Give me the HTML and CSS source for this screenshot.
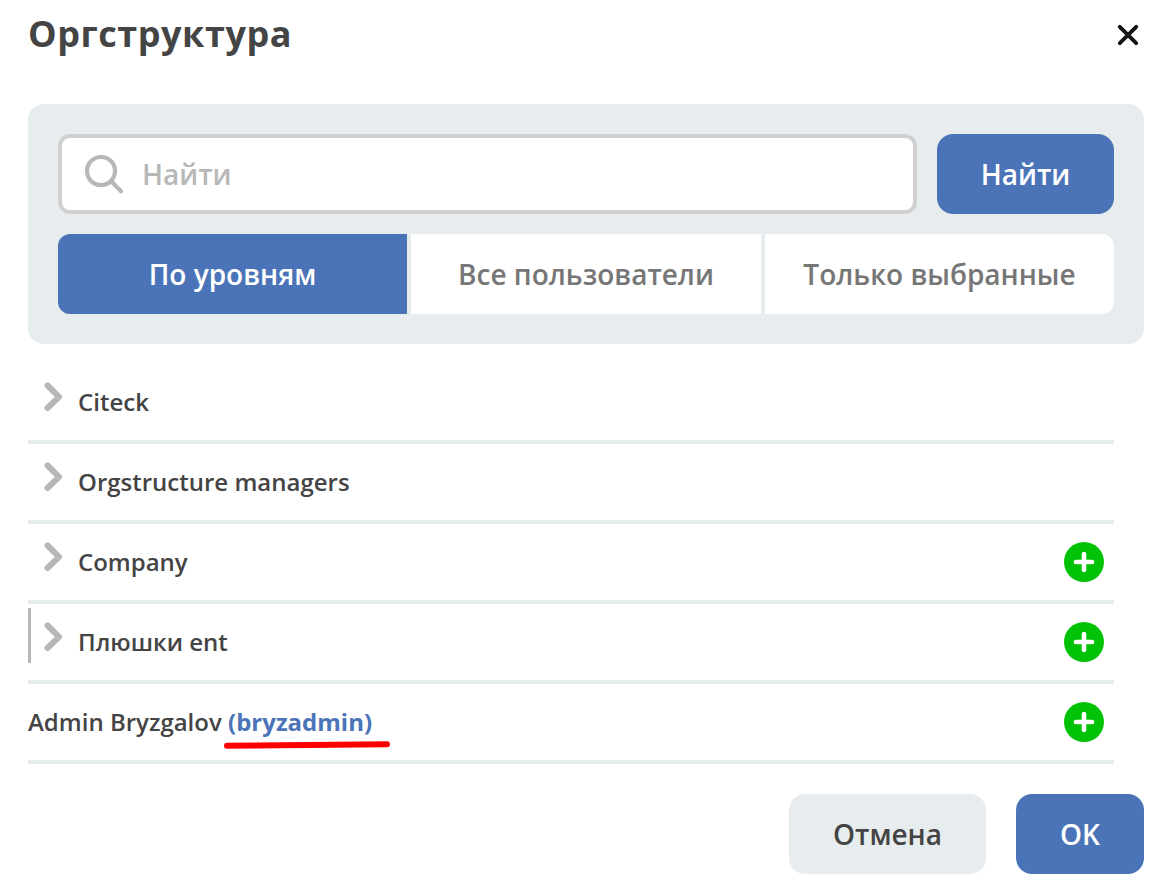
FILE: index.html
```html
<!DOCTYPE html>
<html lang="ru">
<head>
<meta charset="utf-8">
<title>Оргструктура</title>
<link rel="stylesheet" href="styles.css">
</head>
<body>
<svg class="sprite" aria-hidden="true">
  <symbol id="chevron" viewBox="0 0 20 30"><path d="M3.5 3.5 15 14.8 3.5 26"/></symbol>
  <symbol id="plus" viewBox="0 0 40 40"><path d="M20 12v16M12 20h16"/></symbol>
</svg>
<main class="modal">
  <header class="modal-header">
    <h1 class="title"><span>Оргструктура</span></h1>
    <button class="close" aria-label="Закрыть"><svg class="close-icon" viewBox="0 0 22 22"><path d="M2.8 2.8 19.2 19.2M19.2 2.8 2.8 19.2"/></svg></button>
  </header>
  <section class="panel">
    <div class="search-row">
      <div class="search-field">
        <svg class="search-icon" viewBox="0 0 40 40"><circle cx="17" cy="17" r="14"/><path d="M27.2 27.2 37 37.2"/></svg>
        <span class="placeholder">Найти</span>
      </div>
      <button class="btn btn-primary btn-find"><span>Найти</span></button>
    </div>
    <div class="tabs">
      <button class="tab tab-active"><span>По уровням</span></button>
      <button class="tab"><span>Все пользователи</span></button>
      <button class="tab"><span>Только выбранные</span></button>
    </div>
  </section>
  <ul class="list">
    <li class="row"><svg class="chevron"><use href="#chevron"/></svg><span class="name">Citeck</span></li>
    <li class="row"><svg class="chevron"><use href="#chevron"/></svg><span class="name">Orgstructure managers</span></li>
    <li class="row"><svg class="chevron"><use href="#chevron"/></svg><span class="name">Company</span><svg class="add"><use href="#plus"/></svg></li>
    <li class="row row-marked"><svg class="chevron"><use href="#chevron"/></svg><span class="name">Плюшки ent</span><svg class="add"><use href="#plus"/></svg></li>
    <li class="row row-person"><span class="name">Admin Bryzgalov <strong class="login">(bryzadmin)<svg class="underline" viewBox="0 0 166 8"><path d="M3 4.8 163 3.2"/></svg></strong></span><svg class="add"><use href="#plus"/></svg></li>
  </ul>
  <footer class="actions">
    <button class="btn btn-cancel"><span>Отмена</span></button>
    <button class="btn btn-primary btn-ok"><span>OK</span></button>
  </footer>
</main>
</body>
</html>
```
FILE: styles.css
```css
* { box-sizing: border-box; }
body {
  margin: 0;
  background: #fff;
  color: #444;
  font-family: "Open Sans", sans-serif;
}
button {
  border: 0;
  padding: 0;
  background: none;
  color: inherit;
  font: inherit;
}
svg { fill: none; stroke-linecap: round; stroke-linejoin: round; }
.sprite { display: none; }
.modal { height: 894px; padding: 0 27px 0 28px; overflow: hidden; }
.modal-header {
  display: flex;
  justify-content: space-between;
  align-items: center;
  height: 70px;
}
.title { margin: 0 0 2px; font-size: 36px; line-height: 48px; font-weight: 700; letter-spacing: 0.54px; }
.close { display: flex; margin-right: 5px; }
.close-icon { width: 22px; height: 22px; stroke: #141414; stroke-width: 3.9; }
.panel {
  height: 240px;
  margin-top: 34px;
  padding: 30px;
  border-radius: 16px;
  background: #e7ecee;
}
.search-row { display: flex; gap: 20px; }
.search-field {
  flex: 1;
  display: flex;
  align-items: center;
  gap: 18px;
  height: 80px;
  padding-left: 22px;
  border: 4px solid #d0d0d0;
  border-radius: 12px;
  background: #fff;
}
.search-icon { width: 40px; height: 40px; stroke: #b7b7b7; stroke-width: 4.2; }
.placeholder { color: #b7b7b7; font-size: 28px; font-weight: 600; }
.btn { height: 80px; border-radius: 16px; font-size: 28px; font-weight: 600; }
.btn-primary { background: #4b74b8; color: #fff; }
.btn-find { width: 177px; }
.tabs { display: grid; grid-template-columns: 349px 350px 349px; gap: 4px; margin-top: 20px; border-radius: 12px; overflow: hidden; }
.tab { height: 80px; background: #fff; color: #767676; font-size: 28px; font-weight: 600; }
.tab-active { background: #4b74b8; color: #fff; }
.list { margin: 20px 30px 0 0; padding: 0; list-style: none; }
.row {
  position: relative;
  display: flex;
  align-items: center;
  height: 80px;
  padding: 0 10px 0 16px;
  border-bottom: 4px solid #e7ecee;
}
.chevron { width: 20px; height: 30px; margin: -10px 14px 0 0; stroke: #b7b7b7; stroke-width: 6; }
.name { font-size: 24px; line-height: 36px; font-weight: 600; }
.add { width: 40px; height: 40px; margin-left: auto; border-radius: 50%; background: #00c308; stroke: #fff; stroke-width: 4.6; }
.row-marked::before {
  content: "";
  position: absolute;
  left: 0;
  top: 4px;
  width: 3px;
  height: 55px;
  background: #b7b7b7;
}
.row-person { padding-left: 0; }
.login { position: relative; color: #4b74b8; font-weight: 700; }
.underline { position: absolute; left: -4px; top: 36px; width: 166px; height: 8px; stroke: #f00; stroke-width: 6; }
.actions { display: flex; justify-content: flex-end; gap: 30px; margin-top: 30px; }
.btn-cancel { width: 197px; background: #e7ecee; }
.btn-ok { width: 128px; }
```
